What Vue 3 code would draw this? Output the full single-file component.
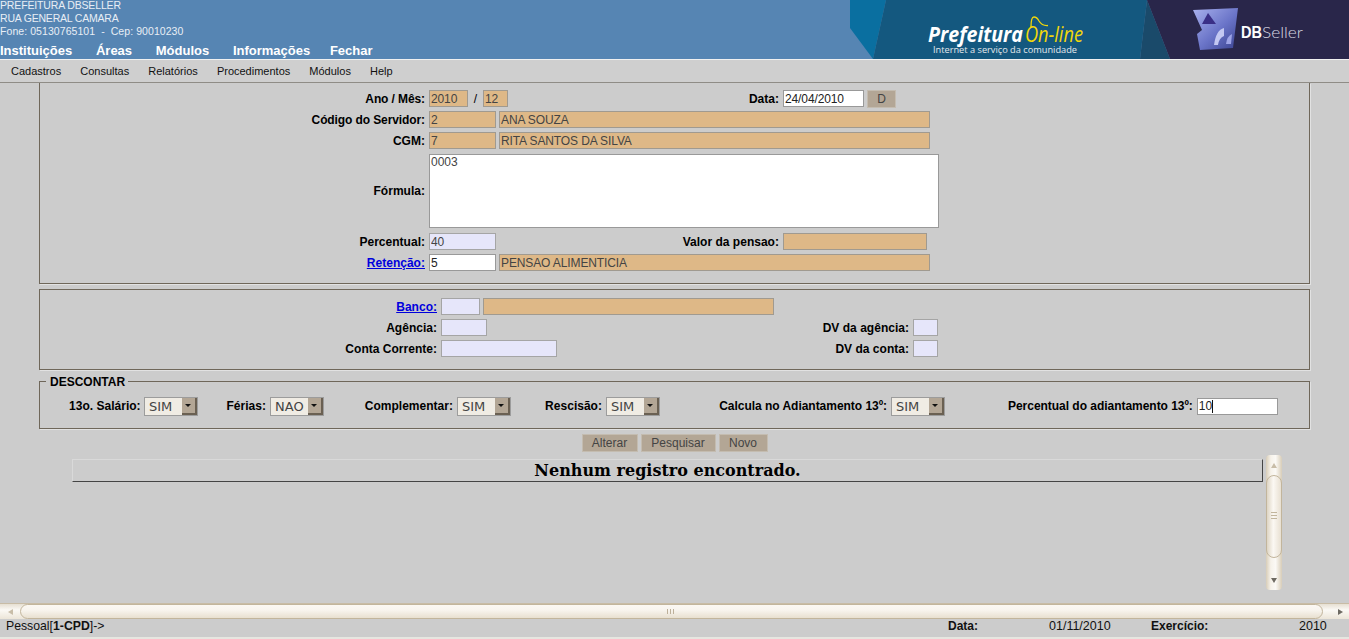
<template>
  <div class="page">
    <header class="top">
      <div class="top-left">
        <div class="address">
          <div class="addr-1">PREFEITURA DBSELLER</div>
          <div class="addr-2">RUA GENERAL CAMARA</div>
          <div class="addr-3">Fone: 05130765101 &nbsp;-&nbsp; Cep: 90010230</div>
        </div>
        <nav class="main-menu">
          <span v-for="item in mainMenu" :key="item">{{ item }}</span>
        </nav>
      </div>
      <svg class="banner" width="499" height="59" viewBox="0 0 499 59">
        <defs>
          <linearGradient id="cube" x1="0" y1="0" x2="1" y2="1">
            <stop offset="0" stop-color="#aab2ee" />
            <stop offset="0.55" stop-color="#6a74c8" />
            <stop offset="1" stop-color="#39428f" />
          </linearGradient>
        </defs>
        <polygon points="0,0 36,0 23,59 0,28" fill="#0a6fa0" />
        <polygon points="36,0 297,0 290,59 23,59" fill="#14587f" />
        <polygon points="297,0 320,59 290,59" fill="#1a4a6a" />
        <polygon points="297,0 499,0 499,59 320,59" fill="#29264a" />
        <path d="M343 10 L388 8 L383 48 L350 50 L347 34 L352 30 Z" fill="url(#cube)" />
        <path d="M358 13 L366 24 L352 24 Z" fill="#3a2f86" />
        <path d="M364 45 Q366 30 374 28 L374 36 Q369 38 368 45 Z" fill="#c3c8f2" />
        <path d="M376 44 Q377 36 382 34 L381 44 Z" fill="#9ea4e6" />
        <text x="78" y="42" class="logo-a" textLength="95" lengthAdjust="spacingAndGlyphs">Prefeitura</text>
        <text x="175" y="42" class="logo-b" textLength="58" lengthAdjust="spacingAndGlyphs">On-line</text>
        <path d="M181 27 Q181 17 184 17 Q187 17 189 21 Q192 26 198 25.5" fill="none" stroke="#f2d70a" stroke-width="1.3" />
        <text x="83" y="53" class="logo-c" textLength="144" lengthAdjust="spacingAndGlyphs">Internet a serviço da comunidade</text>
        <text x="391" y="38" class="logo-d" textLength="21" lengthAdjust="spacingAndGlyphs">DB</text>
        <text x="412" y="38" class="logo-e" textLength="41" lengthAdjust="spacingAndGlyphs">Seller</text>
      </svg>
    </header>

    <nav class="sub-menu">
      <span v-for="item in subMenu" :key="item">{{ item }}</span>
    </nav>

    <main class="content">
      <section class="box box-one">
        <div class="row">
          <label class="lbl lbl-a tight">Ano / Mês:</label>
          <input class="ro w39" value="2010" readonly />
          <span class="slash">/</span>
          <input class="ro w25" value="12" readonly />
          <label class="lbl lbl-right">Data:</label>
          <input class="white w81" value="24/04/2010" />
          <button class="btn btn-d">D</button>
        </div>
        <div class="row">
          <label class="lbl lbl-a tight">Código do Servidor:</label>
          <input class="ro w67" value="2" readonly />
          <input class="ro w431" value="ANA SOUZA" readonly />
        </div>
        <div class="row">
          <label class="lbl lbl-a">CGM:</label>
          <input class="ro w67" value="7" readonly />
          <input class="ro w431" value="RITA SANTOS DA SILVA" readonly />
        </div>
        <div class="row row-formula">
          <label class="lbl lbl-a">Fórmula:</label>
          <textarea class="formula" readonly>0003</textarea>
        </div>
        <div class="row">
          <label class="lbl lbl-a">Percentual:</label>
          <input class="lav w67" value="40" readonly />
          <label class="lbl lbl-right2">Valor da pensao:</label>
          <input class="ro w144" readonly />
        </div>
        <div class="row">
          <label class="lbl lbl-a"><a href="#">Retenção:</a></label>
          <input class="white w67" value="5" />
          <input class="ro w431" value="PENSAO ALIMENTICIA" readonly />
        </div>
      </section>

      <section class="box box-two">
        <div class="row">
          <label class="lbl lbl-b"><a href="#">Banco:</a></label>
          <input class="lav w39" readonly />
          <input class="ro w291" readonly />
        </div>
        <div class="row">
          <label class="lbl lbl-b">Agência:</label>
          <input class="lav w46" readonly />
          <label class="lbl lbl-dv1">DV da agência:</label>
          <input class="lav w25" readonly />
        </div>
        <div class="row">
          <label class="lbl lbl-b">Conta Corrente:</label>
          <input class="lav w116" readonly />
          <label class="lbl lbl-dv2">DV da conta:</label>
          <input class="lav w25" readonly />
        </div>
      </section>

      <fieldset class="descontar">
        <legend><span>DESCONTAR</span></legend>
        <div class="sel-row">
          <div v-for="item in descontos" :key="item.label" class="sel-item" :style="{ marginLeft: item.gap + 'px' }">
            <label class="sel-lbl" :style="{ width: item.width + 'px' }">{{ item.label }}</label>
            <div class="sel">
              <span>{{ item.value }}</span>
              <i class="arrow"></i>
            </div>
          </div>
          <div class="sel-item perc">
            <label class="sel-lbl">Percentual do adiantamento 13º:</label>
            <div class="caret-wrap">
              <input class="white w81" value="10" />
              <i class="caret"></i>
            </div>
          </div>
        </div>
      </fieldset>

      <div class="actions">
        <button class="btn w56">Alterar</button>
        <button class="btn w75">Pesquisar</button>
        <button class="btn w49">Novo</button>
      </div>

      <div class="lower">
        <div class="empty">Nenhum registro encontrado.</div>
        <div class="vscroll">
          <i class="tri tri-up"></i>
          <div class="vthumb"><b></b></div>
          <i class="tri tri-down"></i>
        </div>
      </div>

      <div class="hscroll">
        <i class="tri tri-left"></i>
        <div class="hthumb"><b></b></div>
        <i class="tri tri-right"></i>
      </div>
    </main>

    <footer class="status">
      <span class="st-a">Pessoal[<b>1-CPD</b>]-&gt;</span>
      <b class="st-b">Data:</b>
      <span class="st-c">01/11/2010</span>
      <b class="st-d">Exercício:</b>
      <span class="st-e">2010</span>
    </footer>
  </div>
</template>

<script setup>
const mainMenu = ["Instituições", "Áreas", "Módulos", "Informações", "Fechar"];
const subMenu = ["Cadastros", "Consultas", "Relatórios", "Procedimentos", "Módulos", "Help"];

const descontos = [
  { label: "13o. Salário:", value: "SIM", gap: 29, width: 71 },
  { label: "Férias:", value: "NAO", gap: 28, width: 40 },
  { label: "Complementar:", value: "SIM", gap: 40, width: 89 },
  { label: "Rescisão:", value: "SIM", gap: 33, width: 58 },
  { label: "Calcula no Adiantamento 13º:", value: "SIM", gap: 59, width: 168 },
];
</script>

<style>
html,
body {
  margin: 0;
  background: #cccccc;
  overflow: hidden;
}
</style>

<style scoped>
.page {
  width: 1349px;
  height: 639px;
  overflow: hidden;
  background: #cccccc;
  font-family: "Liberation Sans", Arial, sans-serif;
  font-size: 12px;
  color: #000;
}

.top {
  display: flex;
  justify-content: space-between;
  height: 59px;
  background: #5685b3;
  border-bottom: 1px solid #f0f0f0;
}
.address {
  height: 44px;
  color: #e8eef5;
  font-size: 10.5px;
  line-height: 13px;
  margin-top: -1px;
}
.addr-1 {
  letter-spacing: -0.15px;
}
.addr-2 {
  letter-spacing: -0.2px;
}
.addr-3 {
  letter-spacing: 0.07px;
}
.main-menu {
  display: flex;
  gap: 23.7px;
  font-size: 13px;
  font-weight: bold;
  color: #fff;
  line-height: 16px;
}
.main-menu span:last-child {
  margin-left: -4px;
}
.banner {
  display: block;
}
.logo-a {
  font: italic bold 21px "Open Sans", sans-serif;
  fill: #fff;
}
.logo-b {
  font: italic 21px "Open Sans", sans-serif;
  fill: #f2d70a;
}
.logo-c {
  font: 9.5px "Open Sans", sans-serif;
  fill: #e4e8ec;
}
.logo-d {
  font: bold 16px "Liberation Sans", sans-serif;
  fill: #fff;
}
.logo-e {
  font: 300 16px Lato, sans-serif;
  fill: #d8d8e2;
}

.sub-menu {
  display: flex;
  gap: 19.1px;
  height: 23px;
  padding-left: 11px;
  box-sizing: border-box;
  background: #cfcfcf;
  border-bottom: 1px solid #8f8c86;
  font-size: 11px;
  line-height: 22px;
  color: #111;
}

.box {
  width: 1271px;
  box-sizing: border-box;
  margin-left: 39px;
  border: 1px solid #6f675a;
  box-shadow: 1px 1px 0 #e2e2e2;
}
.box-one {
  border-top: none;
  height: 201px;
  padding-top: 5px;
}
.box-two {
  margin-top: 5px;
  height: 81px;
  padding-top: 6px;
}

.row {
  display: flex;
  align-items: center;
  height: 21px;
}
.row-formula {
  height: 80px;
}
.lbl {
  font-weight: bold;
  text-align: right;
  flex: none;
  margin-right: 4px;
  letter-spacing: 0.02px;
}
.lbl.tight {
  letter-spacing: -0.1px;
}
.lbl a {
  color: #0000dd;
}
.lbl-a {
  width: 385px;
}
.lbl-b {
  width: 397px;
}
.lbl-right {
  width: 271px;
}
.lbl-right2 {
  width: 283px;
}
.lbl-dv1 {
  width: 422px;
}
.lbl-dv2 {
  width: 352px;
}
.slash {
  width: 15px;
  text-align: center;
}

input {
  box-sizing: border-box;
  height: 17px;
  padding: 0 1px;
  margin: 0;
  border: 1px solid #999;
  font-family: "Liberation Sans", Arial, sans-serif;
  font-size: 12px;
  letter-spacing: -0.12px;
  color: #444;
  outline: none;
  flex: none;
}
.ro {
  background: #deb887;
  border-color: #a09a90;
}
.ro + .ro {
  margin-left: 3px;
}
.lav {
  background: #e6e6fa;
  border-color: #a5a5a5;
}
.lav + .ro,
.white + .ro {
  margin-left: 3px;
}
.white {
  background: #fff;
  color: #222;
}
.w25 { width: 25px; }
.w39 { width: 39px; }
.w46 { width: 46px; }
.w67 { width: 67px; }
.w81 { width: 81px; }
.w116 { width: 116px; }
.w144 { width: 144px; }
.w291 { width: 291px; }
.w431 { width: 431px; }

.formula {
  box-sizing: border-box;
  width: 510px;
  height: 74px;
  margin: 0;
  padding: 0 1px;
  border: 1px solid #999;
  background: #fff;
  font-family: "Liberation Sans", Arial, sans-serif;
  font-size: 12px;
  color: #444;
  resize: none;
  outline: none;
}

.btn {
  box-sizing: border-box;
  height: 18px;
  padding: 0;
  border: 1px solid #c4bcb0;
  background: #b3a695;
  font-family: "Liberation Sans", Arial, sans-serif;
  font-size: 12px;
  color: #444;
}
.btn-d {
  width: 29px;
  margin-left: 3px;
}
.w56 { width: 56px; }
.w75 { width: 75px; }
.w49 { width: 49px; }

.descontar {
  box-sizing: border-box;
  width: 1271px;
  height: 55px;
  min-width: 0;
  margin: 4px 0 0 39px;
  padding: 9px 0 0 0;
  border: 1px solid #6f675a;
  box-shadow: 1px 1px 0 #e2e2e2;
}
.descontar legend {
  margin-left: 6px;
  padding: 0 3px 0 4px;
  font-weight: bold;
  font-size: 12px;
  line-height: 14px;
}
.descontar legend span {
  position: relative;
  top: 1px;
}
.sel-row {
  display: flex;
  align-items: center;
  height: 18px;
}
.sel-item {
  display: flex;
  align-items: center;
  flex: none;
}
.sel-lbl {
  font-weight: bold;
  margin-right: 4px;
  text-align: right;
  white-space: nowrap;
  letter-spacing: 0.02px;
}
.sel-item:nth-child(5) .sel-lbl,
.perc .sel-lbl {
  letter-spacing: -0.03px;
}
.perc {
  margin-left: 63px;
}
.sel {
  box-sizing: border-box;
  display: flex;
  justify-content: space-between;
  width: 54px;
  height: 19px;
  border: 1px solid #9c9c9c;
  background: #f0ece4;
  font-family: "DejaVu Sans", sans-serif;
  font-size: 13px;
  line-height: 18px;
  color: #444;
  padding-left: 4px;
}
.arrow {
  position: relative;
  width: 15px;
  height: 17px;
  background: #b3a695;
  border-right: 2px solid #6a6052;
  border-bottom: 2px solid #6a6052;
  box-sizing: border-box;
}
.arrow::after {
  content: "";
  position: absolute;
  left: 3px;
  top: 6px;
  border: 3px solid transparent;
  border-top: 3px solid #111;
}
.caret-wrap {
  position: relative;
  display: flex;
}
.caret {
  position: absolute;
  left: 15px;
  top: 2px;
  width: 1px;
  height: 13px;
  background: #111;
}

.actions {
  display: flex;
  justify-content: center;
  gap: 3px;
  margin-top: 5px;
}

.lower {
  display: flex;
  align-items: flex-start;
  height: 148px;
  margin-top: 3px;
  padding-left: 72px;
}
.empty {
  box-sizing: border-box;
  width: 1191px;
  height: 23px;
  margin-top: 4px;
  border-top: 1px solid #d9d9d9;
  border-left: 1px solid #d9d9d9;
  border-right: 1px solid #444;
  border-bottom: 1px solid #444;
  text-align: center;
  font-family: "DejaVu Serif", serif;
  font-weight: bold;
  font-size: 16px;
  line-height: 21px;
}
.vscroll {
  position: relative;
  box-sizing: border-box;
  width: 16px;
  height: 135px;
  margin-left: 3px;
  border-radius: 4px;
  background: linear-gradient(to right, #d8cdb8, #f6f2ea 30%, #fbf9f5 60%, #d8cdb8);
}
.vthumb {
  position: absolute;
  left: 0;
  top: 20px;
  box-sizing: border-box;
  width: 16px;
  height: 83px;
  border: 1px solid #c2b59c;
  border-radius: 8px;
  background: linear-gradient(to right, #ded5c4, #fbf8f3 45%, #e8e0d2);
}
.vthumb b {
  position: absolute;
  left: 4px;
  top: 36px;
  width: 6px;
  height: 5px;
  border-top: 1px solid #c2b59c;
  border-bottom: 1px solid #c2b59c;
  background: linear-gradient(#c2b59c, #c2b59c) center / 100% 1px no-repeat;
}
.hscroll {
  position: relative;
  box-sizing: border-box;
  height: 16px;
  border-top: 1px solid #c8bca6;
  background: linear-gradient(to bottom, #e6dfd2, #fbf9f5 40%, #ece5d8);
}
.hthumb {
  position: absolute;
  left: 20px;
  top: 0;
  right: 26px;
  box-sizing: border-box;
  height: 15px;
  border: 1px solid #c2b59c;
  border-radius: 8px;
  background: linear-gradient(to bottom, #fbf8f3, #f8f4ee 40%, #e8e0d0);
}
.hthumb b {
  position: absolute;
  left: 646px;
  top: 4px;
  width: 5px;
  height: 5px;
  border-left: 1px solid #bdb09a;
  border-right: 1px solid #bdb09a;
  background: linear-gradient(#bdb09a, #bdb09a) center / 1px 100% no-repeat;
}
.tri {
  position: absolute;
  width: 0;
  height: 0;
  border: 3px solid transparent;
}
.tri-up {
  left: 5px;
  top: 8px;
  border-top: 0;
  border-bottom: 5px solid #c8bda8;
}
.tri-down {
  left: 5px;
  bottom: 7px;
  border-bottom: 0;
  border-top: 5px solid #6e6a62;
}
.tri-left {
  left: 8px;
  top: 5px;
  border-left: 0;
  border-right: 5px solid #c8bda8;
}
.tri-right {
  right: 6px;
  top: 5px;
  border-right: 0;
  border-left: 5px solid #6e6a62;
}

.status {
  position: relative;
  height: 18px;
  font-size: 12.5px;
  line-height: 14px;
  border-bottom: 2px solid #e6e6e0;
  color: #111;
}
.status > * {
  position: absolute;
  top: 0;
}
.st-a { left: 6px; font-size: 12.25px; }
.st-b { left: 948px; font-size: 12px; }
.st-c { left: 1049px; }
.st-d { left: 1151px; font-size: 12px; }
.st-e { left: 1299px; }
</style>
